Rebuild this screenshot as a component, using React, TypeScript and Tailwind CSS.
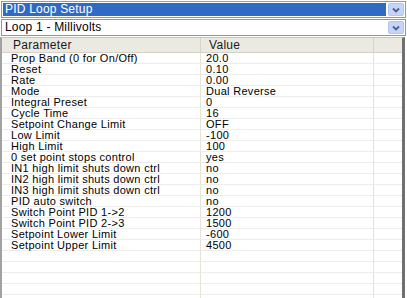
const rows: [string, string][] = [
  ['Prop Band (0 for On/Off)', '20.0'],
  ['Reset', '0.10'],
  ['Rate', '0.00'],
  ['Mode', 'Dual Reverse'],
  ['Integral Preset', '0'],
  ['Cycle Time', '16'],
  ['Setpoint Change Limit', 'OFF'],
  ['Low Limit', '-100'],
  ['High Limit', '100'],
  ['0 set point stops control', 'yes'],
  ['IN1 high limit shuts down ctrl', 'no'],
  ['IN2 high limit shuts down ctrl', 'no'],
  ['IN3 high limit shuts down ctrl', 'no'],
  ['PID auto switch', 'no'],
  ['Switch Point PID 1->2', '1200'],
  ['Switch Point PID 2->3', '1500'],
  ['Setpoint Lower Limit', '-600'],
  ['Setpoint Upper Limit', '4500'],
  ['', ''],
  ['', ''],
  ['', ''],
  ['', ''],
  ['', ''],
];

function DropButton() {
  return (
    <div className="w-[16px] flex items-center justify-center bg-[#C4D4FA] border border-[#B3C6F0] rounded-[2px]">
      <svg width="8" height="6" viewBox="0 0 8 6">
        <polyline points="1,1.5 4,4.5 7,1.5" fill="none" stroke="#4D6185" strokeWidth="1.8" />
      </svg>
    </div>
  );
}

function Select({ label, active }: { label: string; active?: boolean }) {
  return (
    <div className="mx-[1px] h-[17px] flex gap-[2px] p-[1px] bg-white border border-[#7F9DB9]">
      <div
        className={
          active
            ? 'flex-1 bg-[#316AC5] text-white pl-[2px] leading-[13px]'
            : 'flex-1 text-black pl-[2px] leading-[13px]'
        }
      >
        {label}
      </div>
      <DropButton />
    </div>
  );
}

export default function App() {
  return (
    <div
      className="w-[407px] h-[298px] overflow-hidden bg-white text-[11px] tracking-[0.3px]"
      style={{ fontFamily: '"Liberation Sans", Arial, sans-serif' }}
    >
      <div className="pt-[1px] flex flex-col gap-[1px] text-[12px] tracking-[0.2px]">
        <Select label="PID Loop Setup" active />
        <Select label="Loop 1 - Millivolts" />
      </div>

      {/* Parameter table */}
      <div className="mt-[1px] w-[405px] border-l-2 border-l-[#A2A2A2] border-r-[3px] border-r-[#707070] border-t border-t-[#C9C7BA]">
        <div className="grid grid-cols-[199px_173px_28px] h-[15px] bg-[#EBEAE2] text-[#1a1a1a] text-[12px] leading-[14px]">
          <div className="pl-[11px] border-r border-[#D8D5C8] border-b border-b-[#D6D3C6]">Parameter</div>
          <div className="pl-[8px] border-r border-[#D8D5C8] border-b border-b-[#D6D3C6]">Value</div>
          <div className="border-b border-b-[#D6D3C6]"></div>
        </div>
        {rows.map(([name, value], i) => (
          <div key={i} className="grid grid-cols-[199px_173px_28px] h-[11px] leading-[10px] text-black">
            <div className="pl-[9px] border-r border-[#E6E3D8] border-b border-b-[#EDEDED] whitespace-nowrap">{name}</div>
            <div className="pl-[5px] border-r border-[#E6E3D8] border-b border-b-[#EDEDED] whitespace-nowrap">{value}</div>
            <div className="border-b border-b-[#EDEDED]"></div>
          </div>
        ))}
      </div>
    </div>
  );
}
